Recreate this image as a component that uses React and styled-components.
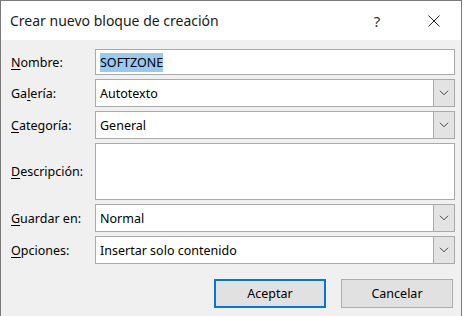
import styled, { createGlobalStyle } from 'styled-components';

const GlobalStyle = createGlobalStyle`
body{
margin:0;
background:#ffffff;
font-family:"Noto Sans","Liberation Sans",sans-serif;
}
`
const Window = styled.div`
width:462px;
height:316px;
box-sizing:border-box;
border:1px solid #7a7a7a;
border-bottom:none;
background:#f0f0f0;
display:flex;
flex-direction:column;
`
const TitleBar = styled.div`
height:39px;
background:#ffffff;
display:flex;
align-items:center;
padding-left:9px;
padding-right:12px;
`
const Title = styled.div`
flex:1;
font-size:14px;
color:#1a1a1a;
`
const TitleButton = styled.div`
width:30px;
display:flex;
justify-content:center;
align-items:center;
font-size:15px;
color:#333;
margin-left:${p => p.gap || 0}px;
`
const Body = styled.div`
padding:9px 6px 0 9px;
display:flex;
flex-direction:column;
`
const Form = styled.div`
display:grid;
grid-template-columns:85px 1fr;
row-gap:4px;
`
const Label = styled.div`
font-size:12.5px;
color:#000;
display:flex;
align-items:center;
padding-left:1px;
u{
text-decoration:underline;
text-underline-offset:2px;
}
`
const Field = styled.div`
height:${p => p.h || 28}px;
box-sizing:border-box;
border:1px solid #a9a9a9;
background:#fff;
display:flex;
align-items:center;
font-size:12.5px;
color:#000;
padding-left:4px;
padding-right:${p => p.combo ? 0 : 4}px;
`
const Selected = styled.span`
background:#99c9ef;
padding:1px 0;
`
const Value = styled.div`
flex:1;
`
const Arrow = styled.div`
width:21px;
height:100%;
box-sizing:border-box;
border-left:1px solid #a9a9a9;
background:#e3e3e3;
display:flex;
align-items:center;
justify-content:center;
`
const Buttons = styled.div`
display:flex;
justify-content:flex-end;
gap:15px;
margin-top:15px;
margin-right:2px;
`
const Button = styled.div`
width:112px;
height:29px;
box-sizing:border-box;
border:${p => p.primary ? '2px solid #0078d7' : '1px solid #adadad'};
background:#e1e1e1;
display:flex;
align-items:center;
justify-content:center;
font-size:12.5px;
color:#000;
`

const Chevron = () => (
    <svg width="10" height="6" viewBox="0 0 10 6">
        <path d="M1 0.8 L5 4.8 L9 0.8" fill="none" stroke="#444" strokeWidth="1"/>
    </svg>
)

const Combo = ({children}) => <Field combo>
    <Value>{children}</Value>
    <Arrow><Chevron/></Arrow>
</Field>

const App=()=>{

    return <Window>
        <GlobalStyle/>
        <TitleBar>
            <Title>Crear nuevo bloque de creación</Title>
            <TitleButton>?</TitleButton>
            <TitleButton gap={27}>
                <svg width="12" height="12" viewBox="0 0 12 12">
                    <path d="M0.5 0.5 L11.5 11.5 M11.5 0.5 L0.5 11.5" stroke="#222" strokeWidth="1"/>
                </svg>
            </TitleButton>
        </TitleBar>
        <Body>
            <Form>
                <Label><span><u>N</u>ombre:</span></Label>
                <Field h={26}><Selected>SOFTZONE</Selected></Field>

                <Label><span>Ga<u>l</u>ería:</span></Label>
                <Combo>Autotexto</Combo>

                <Label><span><u>C</u>ategoría:</span></Label>
                <Combo>General</Combo>

                <Label><span><u>D</u>escripción:</span></Label>
                <Field h={57}/>

                <Label><span><u>G</u>uardar en:</span></Label>
                <Combo>Normal</Combo>

                <Label><span><u>O</u>pciones:</span></Label>
                <Combo>Insertar solo contenido</Combo>
            </Form>
            <Buttons>
                <Button primary>Aceptar</Button>
                <Button>Cancelar</Button>
            </Buttons>
        </Body>
    </Window>
}

export default App;
